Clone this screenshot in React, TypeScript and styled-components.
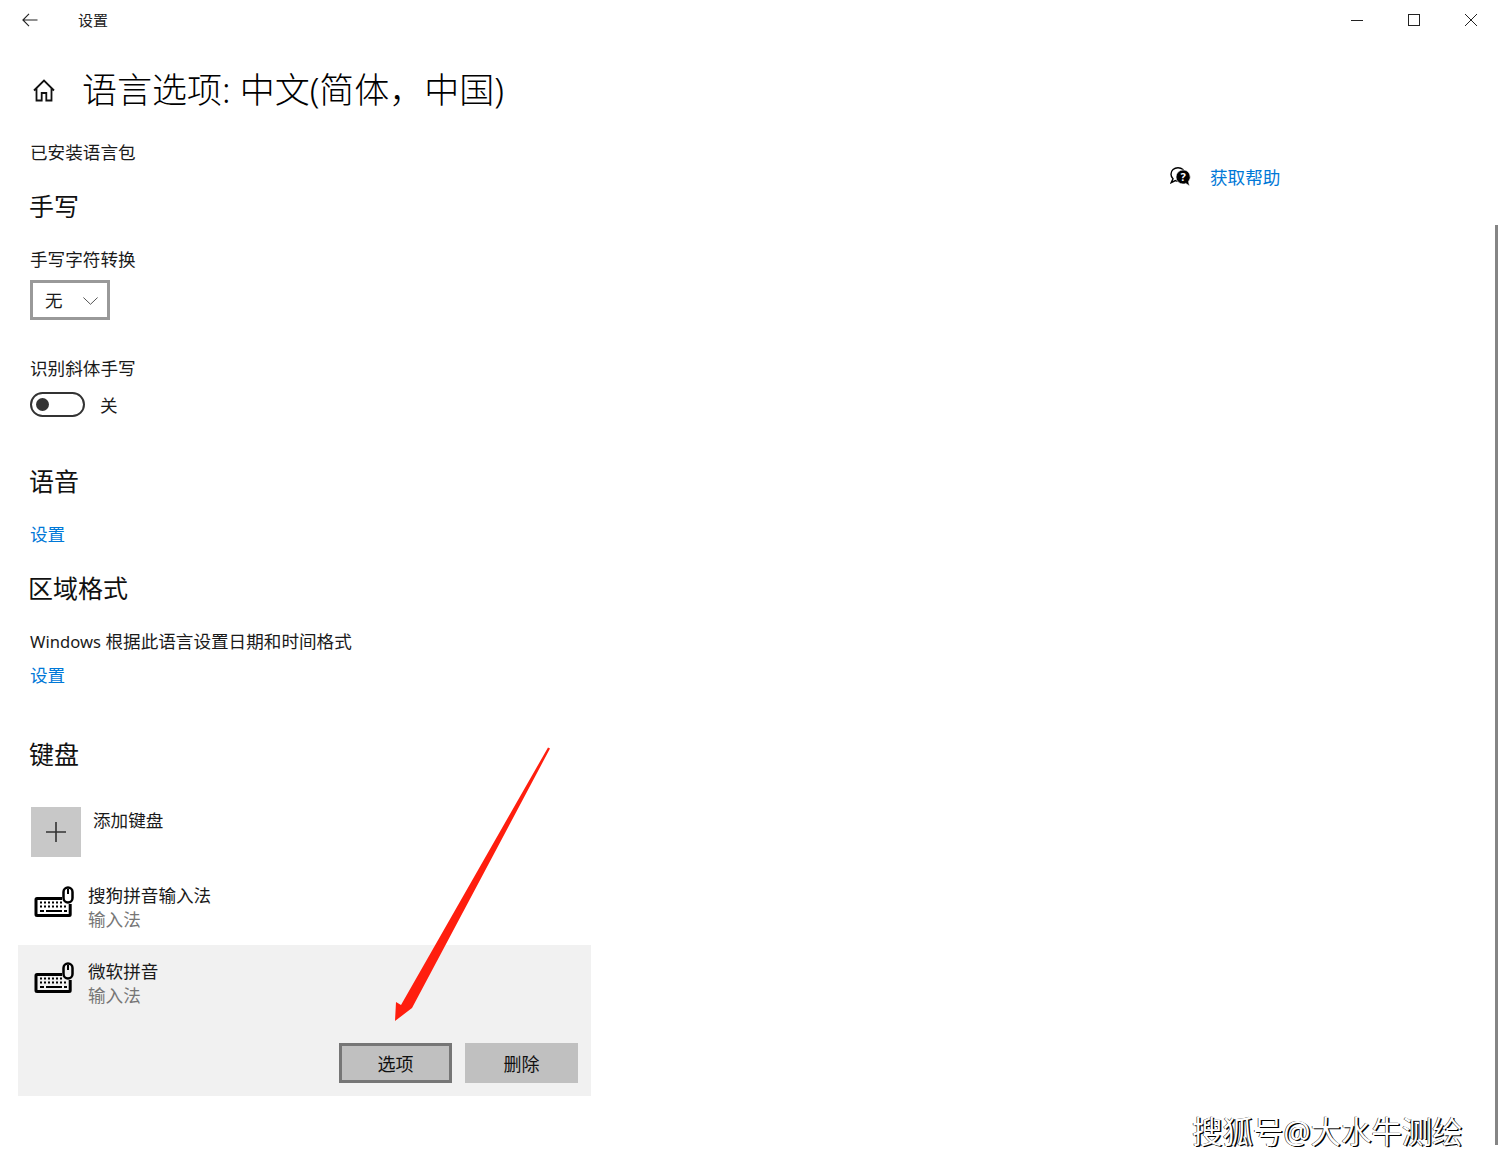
import styled, { createGlobalStyle } from "styled-components";

const GlobalStyle = createGlobalStyle`
  html, body {
    margin: 0;
    padding: 0;
    background: #fff;
  }
  body {
    font-family: "Noto Sans", "Noto Sans CJK SC", sans-serif;
    color: #111;
  }
`;

const Page = styled.div`
  position: relative;
  width: 1500px;
  height: 1165px;
  overflow: hidden;
  background: #fff;
`;

const TitleBar = styled.header`
  display: flex;
  align-items: center;
  height: 40px;
  padding-left: 22px;
`;

const AppName = styled.span`
  margin-left: 40px;
  font-size: 15px;
  line-height: 20px;
  color: #222;
`;

const WindowButtons = styled.div`
  display: flex;
  margin-left: auto;
  padding-right: 1px;
`;

const WindowButton = styled.span`
  display: flex;
  justify-content: center;
  align-items: center;
  width: 57px;
  height: 40px;
  color: #222;
`;

const Body = styled.div`
  display: grid;
  grid-template-columns: 1140px 1fr;
`;

const Main = styled.main`
  padding-left: 30px;
`;

const PageHeader = styled.div`
  display: flex;
  align-items: center;
  height: 50px;
  margin-top: 25px;
  margin-left: 3px;
`;

const PageTitle = styled.h1`
  margin: 0 0 0 27px;
  font-size: 35px;
  font-weight: 300;
  line-height: 50px;
  white-space: nowrap;
  color: #000;
`;

const Text = styled.div<{ $top: number }>`
  margin-top: ${(p) => p.$top}px;
  font-size: 17.6px;
  line-height: 24px;
  color: #1a1a1a;
`;

const Latin = styled.span`
  font-size: 16.6px;
  line-height: 1;
`;

const Link = styled.a<{ $top: number }>`
  display: block;
  margin-top: ${(p) => p.$top}px;
  font-size: 17.6px;
  line-height: 24px;
  color: #0078d7;
`;

const Heading = styled.h2<{ $top: number; $left?: number }>`
  margin: ${(p) => p.$top}px 0 0 ${(p) => p.$left ?? -1}px;
  font-size: 25px;
  font-weight: 400;
  line-height: 34px;
  color: #111;
`;

const Select = styled.div`
  display: flex;
  align-items: center;
  justify-content: space-between;
  box-sizing: border-box;
  width: 80px;
  height: 40px;
  margin-top: 9px;
  padding: 0 9px 2px 12px;
  border: 3px solid #999;
  font-size: 17.6px;
  color: #1a1a1a;

  svg {
    margin-top: 3px;
  }
`;

const ToggleRow = styled.div`
  display: flex;
  align-items: center;
  gap: 15px;
  height: 25px;
  margin-top: 12px;
  font-size: 17.6px;
  color: #1a1a1a;
`;

const Toggle = styled.span`
  display: flex;
  align-items: center;
  box-sizing: border-box;
  width: 55px;
  height: 25px;
  padding-left: 4px;
  border: 2.5px solid #333;
  border-radius: 13px;

  &::before {
    content: "";
    width: 13px;
    height: 13px;
    border-radius: 50%;
    background: #333;
  }
`;

const AddRow = styled.div`
  display: flex;
  margin-top: 36px;
  margin-left: 1px;
`;

const AddTile = styled.span`
  display: flex;
  justify-content: center;
  align-items: center;
  width: 50px;
  height: 50px;
  background: #c8c8c8;
  color: #333;
`;

const AddLabel = styled.span`
  margin-left: 12px;
  font-size: 17.6px;
  line-height: 26px;
  color: #1a1a1a;
`;

const ImeRow = styled.div<{ $top?: number }>`
  display: flex;
  align-items: flex-start;
  gap: 14px;
  margin-top: ${(p) => p.$top ?? 0}px;
  padding: 14px 0 14px 4px;
`;

const ImeIcon = styled.span`
  display: flex;
  margin-top: 2px;
  color: #000;
`;

const ImeName = styled.div`
  font-size: 17.6px;
  line-height: 24px;
  color: #1a1a1a;
`;

const ImeKind = styled.div`
  font-size: 17.6px;
  line-height: 24px;
  color: #767676;
`;

const SelectedPanel = styled.section`
  width: 573px;
  height: 151px;
  margin-left: -12px;
  padding-left: 12px;
  box-sizing: border-box;
  background: #f1f1f1;
`;

const PanelActions = styled.div`
  display: flex;
  justify-content: flex-end;
  gap: 13px;
  margin-top: 22px;
  padding-right: 13px;
`;

const ActionButton = styled.button<{ $focused?: boolean }>`
  box-sizing: border-box;
  width: 113px;
  height: 40px;
  padding: 0;
  background: #c0c0c0;
  border: 3px solid ${(p) => (p.$focused ? "#767676" : "#c0c0c0")};
  font-family: inherit;
  font-size: 18px;
  color: #111;
`;

const Aside = styled.aside`
  display: flex;
  align-items: center;
  gap: 18px;
  height: 24px;
  margin-top: 125px;
  padding-left: 30px;
`;

const ScrollThumb = styled.div`
  position: absolute;
  top: 225px;
  left: 1495px;
  width: 3px;
  height: 920px;
  background: #858585;
`;

const ArrowMark = styled.svg`
  position: absolute;
  top: 0;
  left: 0;
  pointer-events: none;
`;

const Watermark = styled.div`
  position: absolute;
  top: 1111px;
  left: 1192px;
  font-size: 30.4px;
  line-height: 42px;
  white-space: nowrap;
  color: #fff;
  text-shadow: 1.5px 1px 0 #000, -0.5px 0 0 #000;
`;

const KeyboardIcon = () => (
  <svg width="40" height="32" viewBox="0 0 40 32" fill="none" stroke="currentColor">
    <path d="M28 13.500H3a1 1 0 0 0-1 1v15a1 1 0 0 0 1 1h32.200a1 1 0 0 0 1-1V19" strokeWidth="3" />
    <rect x="29.500" y="2.500" width="9" height="15" rx="4.500" strokeWidth="2.500" />
    <path d="M34 4v5" strokeWidth="2" />
    <path
      d="M6 17.500h2M10 17.500h2M14 17.500h2M18 17.500h2M22 17.500h2M26 17.500h2M6 21.500h2M10 21.500h2M14 21.500h2M18 21.500h2M22 21.500h2M26 21.500h2M30 21.500h2M6 26h4M12 26h16M30 26h3"
      strokeWidth="2.200"
    />
  </svg>
);

const HomeIcon = () => (
  <svg width="22" height="23" viewBox="0 0 22 23" fill="none" stroke="#111" strokeWidth="1.8">
    <path d="M1 11.500 11 1.500l10 10M3.500 9.500V21.500h5.200v-7.500h4.600v7.500h5.200V9.500" />
  </svg>
);

const HelpIcon = () => (
  <svg width="22" height="20" viewBox="0 0 22 20">
    <path
      d="M8 .7C4.100.7 1 3.600 1 7.200c0 1.800.8 3.400 2 4.600L1.200 15.600l4.200-2c.8.3 1.700.5 2.600.5 3.900 0 7-3 7-6.900S11.900.7 8 .7Z"
      fill="#fff"
      stroke="#000"
      strokeWidth="1.400"
    />
    <path d="M13 3a7 7 0 1 0 0 14c1 0 2-.2 2.800-.6l3.700 2.600-1-4.400A7 7 0 0 0 13 3Z" fill="#000" stroke="#fff" strokeWidth=".6" />
    <text x="13" y="14" fontSize="11" fontWeight="700" fill="#fff" textAnchor="middle">
      ?
    </text>
  </svg>
);

export default function App() {
  return (
    <Page>
      <GlobalStyle />
      <TitleBar>
        <svg width="16" height="14" viewBox="0 0 16 14" fill="none" stroke="#222" strokeWidth="1.100">
          <path d="M15.500 7H1M7 .8.9 7 7 13.200" />
        </svg>
        <AppName>设置</AppName>
        <WindowButtons>
          <WindowButton>
            <svg width="12" height="12" viewBox="0 0 12 12" stroke="#222" strokeWidth="1">
              <path d="M0 6.500h12" />
            </svg>
          </WindowButton>
          <WindowButton>
            <svg width="12" height="12" viewBox="0 0 12 12" fill="none" stroke="#222" strokeWidth="1">
              <rect x=".5" y=".5" width="11" height="11" />
            </svg>
          </WindowButton>
          <WindowButton>
            <svg width="12" height="12" viewBox="0 0 12 12" stroke="#222" strokeWidth="1">
              <path d="M0 0l12 12M12 0 0 12" />
            </svg>
          </WindowButton>
        </WindowButtons>
      </TitleBar>

      <Body>
        <Main>
          <PageHeader>
            <HomeIcon />
            <PageTitle>语言选项: 中文(简体，中国)</PageTitle>
          </PageHeader>

          <Text $top={25}>已安装语言包</Text>

          <Heading $top={25}>手写</Heading>
          <Text $top={24}>手写字符转换</Text>
          <Select>
            无
            <svg width="15" height="8" viewBox="0 0 15 8" fill="none" stroke="#555" strokeWidth="1">
              <path d="M.4.5 7.500 7.300 14.600.5" />
            </svg>
          </Select>
          <Text $top={36}>识别斜体手写</Text>
          <ToggleRow>
            <Toggle />
            关
          </ToggleRow>

          <Heading $top={47}>语音</Heading>
          <Link $top={24}>设置</Link>

          <Heading $top={25} $left={-2}>
            区域格式
          </Heading>
          <Text $top={24}>
            <Latin>Windows</Latin> 根据此语言设置日期和时间格式
          </Text>
          <Link $top={10}>设置</Link>

          <Heading $top={50}>键盘</Heading>
          <AddRow>
            <AddTile>
              <svg width="22" height="22" viewBox="0 0 22 22" stroke="currentColor" strokeWidth="1.600">
                <path d="M11 1v20M1 11h20" />
              </svg>
            </AddTile>
            <AddLabel>添加键盘</AddLabel>
          </AddRow>

          <ImeRow $top={12}>
            <ImeIcon>
              <KeyboardIcon />
            </ImeIcon>
            <div>
              <ImeName>搜狗拼音输入法</ImeName>
              <ImeKind>输入法</ImeKind>
            </div>
          </ImeRow>

          <SelectedPanel>
            <ImeRow>
              <ImeIcon>
                <KeyboardIcon />
              </ImeIcon>
              <div>
                <ImeName>微软拼音</ImeName>
                <ImeKind>输入法</ImeKind>
              </div>
            </ImeRow>
            <PanelActions>
              <ActionButton $focused>选项</ActionButton>
              <ActionButton>删除</ActionButton>
            </PanelActions>
          </SelectedPanel>
        </Main>

        <Aside>
          <HelpIcon />
          <Link $top={0}>获取帮助</Link>
        </Aside>
      </Body>

      <ScrollThumb />
      <ArrowMark width="1500" height="1165" viewBox="0 0 1500 1165">
        <polygon points="548,747.500 550,748.500 412,1008 395,1021 396,1002 401,1005" fill="#ff1e0e" />
      </ArrowMark>
      <Watermark>搜狐号@大水牛测绘</Watermark>
    </Page>
  );
}
